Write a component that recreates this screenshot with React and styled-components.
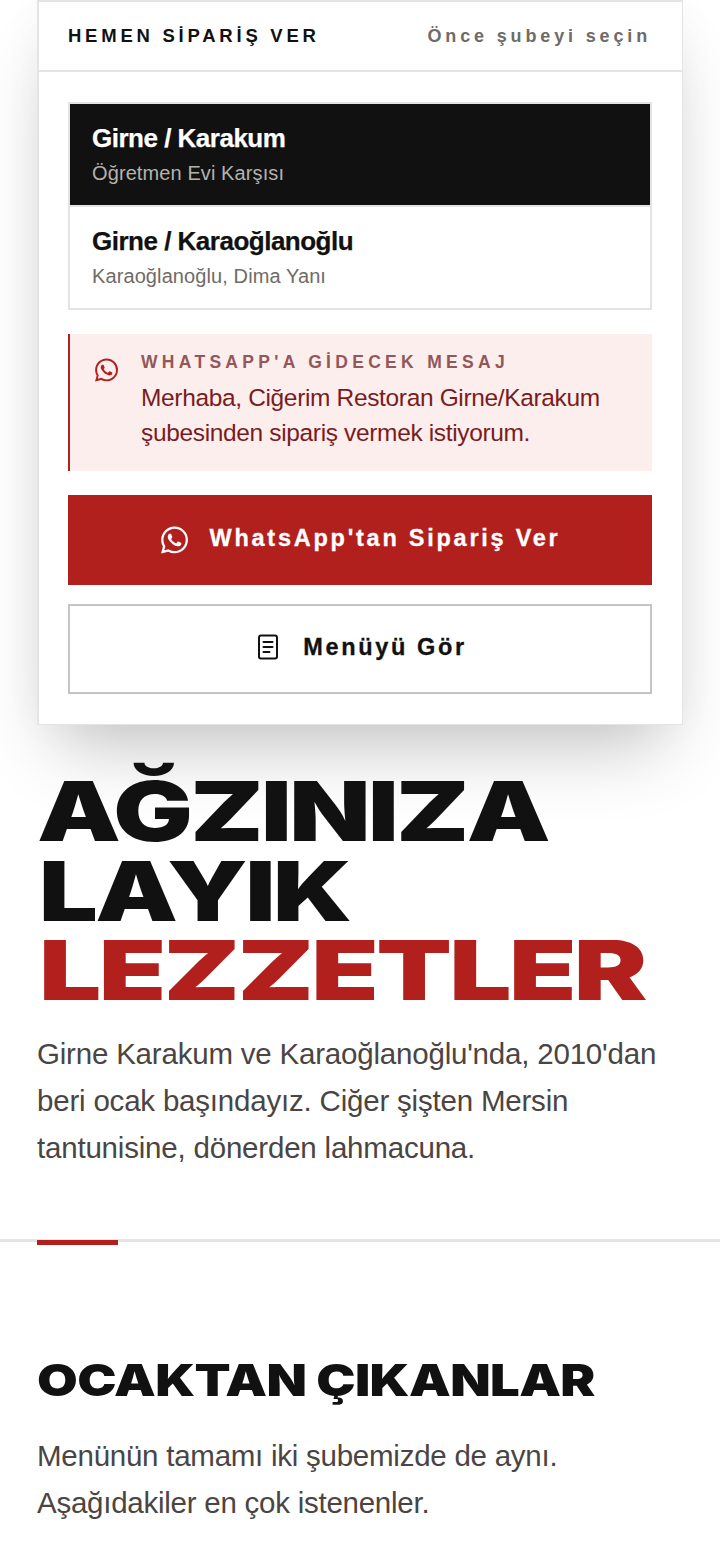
import styled, { createGlobalStyle } from "styled-components";
import { SiWhatsapp } from "react-icons/si";

const GlobalStyle = createGlobalStyle`
  * { box-sizing: border-box; }
  html, body { margin: 0; padding: 0; background: #fff; }
  body {
    font-family: "Liberation Sans", Arial, sans-serif;
    color: #111;
    overflow-x: hidden;
  }
`;

const Page = styled.div`
  width: 720px;
  height: 1558px;
  overflow: hidden;
`;

const Hero = styled.section`
  padding: 0 37px;
`;

const Card = styled.div`
  background: #fff;
  border: 2px solid #e4e4e2;
  border-right-width: 1px;
  border-bottom-width: 1px;
  height: 725px;
  box-shadow: 0 40px 70px -20px rgba(0, 0, 0, 0.24), 0 0 40px rgba(0, 0, 0, 0.03);
`;

const CardHead = styled.div`
  height: 70px;
  border-bottom: 2px solid #e4e4e2;
  padding: 0 31px 0 29px;
  display: flex;
  align-items: center;
  justify-content: space-between;
`;

const HeadTitle = styled.span`
  font-size: 18.5px;
  font-weight: 700;
  letter-spacing: 3.76px;
  color: #111;
`;

const HeadHint = styled.span`
  font-size: 18px;
  font-weight: 700;
  letter-spacing: 3.85px;
  color: #6f6b68;
`;

const CardBody = styled.div`
  padding: 30px 30px 0 29px;
  display: flex;
  flex-direction: column;
`;

const BranchList = styled.div`
  border: 2px solid #e4e4e2;
  display: flex;
  flex-direction: column;
  gap: 2px;
  background: #e4e4e2;
`;

const Branch = styled.div`
  height: 101px;
  padding: 19px 22px 0;
  background: ${(p) => (p.$active ? "#111" : "#fff")};
  color: ${(p) => (p.$active ? "#fff" : "#111")};
`;

const BranchName = styled.div`
  font-size: 26px;
  line-height: 30px;
  font-weight: 700;
  letter-spacing: -0.5px;
  -webkit-text-stroke: 0.25px currentColor;
`;

const BranchAddress = styled.div`
  margin-top: 8px;
  font-size: 20px;
  line-height: 24px;
  letter-spacing: 0.1px;
  color: ${(p) => (p.$active ? "#b5b2ae" : "#6f6b68")};
`;

const Notice = styled.div`
  margin-top: 24px;
  height: 137px;
  background: #fbeeed;
  border-left: 2px solid #b2201e;
  padding: 16px 20px 0 25px;
  display: flex;
  gap: 23px;
  color: #b2201e;
`;

const NoticeIcon = styled(SiWhatsapp)`
  flex: none;
  width: 23px;
  height: 24px;
  margin-top: 8px;
`;

const NoticeLabel = styled.div`
  font-size: 17.5px;
  line-height: 24px;
  font-weight: 700;
  letter-spacing: 4.3px;
  color: #93575a;
`;

const NoticeText = styled.div`
  margin-top: 6px;
  font-size: 24.5px;
  line-height: 35px;
  letter-spacing: -0.35px;
  color: #7a1c1e;
`;

const Button = styled.div`
  height: 90px;
  display: flex;
  align-items: center;
  justify-content: center;
  gap: ${(p) => (p.$primary ? "21px" : "23px")};
  margin-top: ${(p) => (p.$primary ? "24px" : "19px")};
  background: ${(p) => (p.$primary ? "#b2201e" : "#fff")};
  color: ${(p) => (p.$primary ? "#fff" : "#111")};
  border: ${(p) => (p.$primary ? "none" : "2px solid #c4c4c2")};
  font-size: 23.5px;
  font-weight: 700;
  letter-spacing: ${(p) => (p.$primary ? "2.75px" : "2.65px")};
  -webkit-text-stroke: 0.3px currentColor;
  padding: 0 0 4px ${(p) => (p.$primary ? "2px" : "3px")};
`;

const ButtonIcon = styled(SiWhatsapp)`
  width: 27px;
  height: 28px;
  margin-top: 4px;
`;

const Headline = styled.h1`
  margin: 47px 0 0;
  font-family: Inter, "Liberation Sans", sans-serif;
  font-size: 82px;
  line-height: 79.5px;
  font-weight: 900;
  letter-spacing: -2px;
  color: #111;
`;

const HeadLine = styled.span`
  display: block;
  width: max-content;
  white-space: nowrap;
  margin-left: ${(p) => p.$indent || 0}px;
  transform-origin: left center;
  transform: scaleX(${(p) => p.$scale});
  color: ${(p) => p.$color || "inherit"};
`;

const Lead = styled.p`
  margin: 19px 0 0;
  font-size: 29.5px;
  line-height: 47px;
  letter-spacing: -0.2px;
  color: #4a4543;
`;

const Divider = styled.div`
  margin-top: 68px;
  height: 3px;
  background: #e4e4e2;
  position: relative;
  &::after {
    content: "";
    position: absolute;
    left: 37px;
    top: 1px;
    width: 81px;
    height: 5px;
    background: #b2201e;
  }
`;

const Section = styled.section`
  padding: 112px 37px 0;
`;

const SectionTitle = styled.h2`
  margin: 0;
  font-family: Inter, "Liberation Sans", sans-serif;
  font-size: 44px;
  line-height: 52px;
  font-weight: 900;
  letter-spacing: -0.5px;
  color: #111;
  white-space: nowrap;
  width: max-content;
  transform-origin: left center;
  transform: scaleX(1.195);
`;

const SectionText = styled.p`
  margin: 26px 0 0;
  font-size: 29.5px;
  line-height: 47px;
  letter-spacing: -0.25px;
  color: #4a4543;
`;

function DocIcon() {
  return (
    <svg width="24" height="26" viewBox="0 0 24 26" fill="none" stroke="#111" strokeWidth="2" strokeLinecap="round">
      <rect x="3" y="1.5" width="18" height="23" rx="2" />
      <path d="M7.5 8h9M7.5 13h9M7.5 18h6" />
    </svg>
  );
}

export default function App() {
  return (
    <Page>
      <GlobalStyle />
      <Hero>
        <Card>
          <CardHead>
            <HeadTitle>HEMEN SİPARİŞ VER</HeadTitle>
            <HeadHint>Önce şubeyi seçin</HeadHint>
          </CardHead>
          <CardBody>
            <BranchList>
              <Branch $active>
                <BranchName>Girne / Karakum</BranchName>
                <BranchAddress $active>Öğretmen Evi Karşısı</BranchAddress>
              </Branch>
              <Branch>
                <BranchName>Girne / Karaoğlanoğlu</BranchName>
                <BranchAddress>Karaoğlanoğlu, Dima Yanı</BranchAddress>
              </Branch>
            </BranchList>
            <Notice>
              <NoticeIcon />
              <div>
                <NoticeLabel>WHATSAPP'A GİDECEK MESAJ</NoticeLabel>
                <NoticeText>
                  Merhaba, Ciğerim Restoran Girne/Karakum
                  <br />
                  şubesinden sipariş vermek istiyorum.
                </NoticeText>
              </div>
            </Notice>
            <Button $primary>
              <ButtonIcon />
              WhatsApp'tan Sipariş Ver
            </Button>
            <Button>
              <DocIcon />
              Menüyü Gör
            </Button>
          </CardBody>
        </Card>
        <Headline>
          <HeadLine $scale={1.288}>AĞZINIZA</HeadLine>
          <HeadLine $scale={1.27} $indent={2}>LAYIK</HeadLine>
          <HeadLine $scale={1.345} $indent={2} $color="#b2201e">LEZZETLER</HeadLine>
        </Headline>
        <Lead>
          Girne Karakum ve Karaoğlanoğlu'nda, 2010'dan
          <br />
          beri ocak başındayız. Ciğer şişten Mersin
          <br />
          tantunisine, dönerden lahmacuna.
        </Lead>
      </Hero>
      <Divider />
      <Section>
        <SectionTitle>OCAKTAN ÇIKANLAR</SectionTitle>
        <SectionText>
          Menünün tamamı iki şubemizde de aynı.
          <br />
          Aşağıdakiler en çok istenenler.
        </SectionText>
      </Section>
    </Page>
  );
}
